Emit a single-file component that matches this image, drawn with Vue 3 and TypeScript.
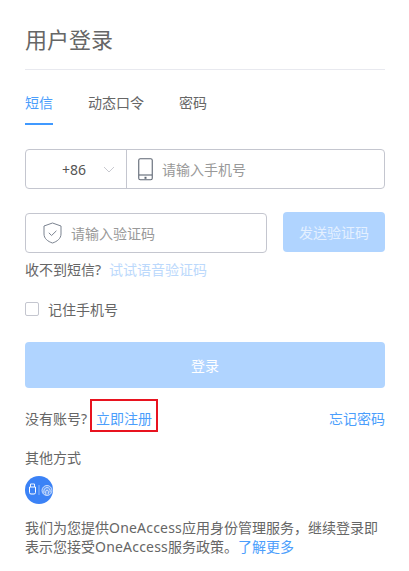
<template>
  <div class="login-page">
    <h1 class="title">用户登录</h1>

    <div class="tabs">
      <span
        v-for="tab in tabs"
        :key="tab"
        class="tab"
        :class="{ active: tab === activeTab }"
        @click="activeTab = tab"
      >{{ tab }}</span>
    </div>

    <div class="phone-box">
      <div class="country">
        <span class="code">+86</span>
        <svg class="chevron" width="12" height="7" viewBox="0 0 12 7" fill="none">
          <path d="M1 1l5 5 5-5" stroke="#c8c9d0" stroke-width="1" />
        </svg>
      </div>
      <div class="phone-input">
        <svg class="phone-icon" width="15" height="23" viewBox="0 0 15 23" fill="none">
          <rect x="0.75" y="0.75" width="13.5" height="21" rx="1.5" stroke="#5e6673" stroke-width="1.1" />
          <path d="M1 17h13" stroke="#5e6673" stroke-width="1.1" />
          <rect x="6.5" y="18.8" width="2" height="2" fill="#5e6673" />
        </svg>
        <input class="field" placeholder="请输入手机号" />
      </div>
    </div>

    <div class="code-row">
      <div class="code-box">
        <svg class="shield" width="19" height="22" viewBox="0 0 19 22" fill="none">
          <path d="M9.5 1L18 4v8c0 4.5-3.8 7.5-8.5 9C4.8 19.5 1 16.5 1 12V4z" stroke="#7b8390" stroke-width="1" />
          <path d="M5.8 10.8l2.8 2.7 4.8-4.7" stroke="#7b8390" stroke-width="1" />
        </svg>
        <input class="field" placeholder="请输入验证码" />
      </div>
      <button class="send-btn" type="button">发送验证码</button>
    </div>

    <p class="help">收不到短信?<span class="voice">试试语音验证码</span></p>

    <label class="remember">
      <span class="check"></span>
      记住手机号
    </label>

    <button class="login-btn" type="button">登录</button>

    <div class="links">
      <span>没有账号?<a class="link mark">立即注册</a></span>
      <a class="link">忘记密码</a>
    </div>

    <div class="other">其他方式</div>
    <div class="other-icon">
      <svg width="28" height="28" viewBox="0 0 28 28" fill="none">
        <circle cx="14" cy="14" r="14" fill="#3b82f6" />
        <path d="M5.5 11V8h4v3" stroke="#fff" stroke-width="0.9" />
        <path d="M4.5 11h6v5.5a1.5 1.5 0 0 1-1.5 1.5h-3a1.5 1.5 0 0 1-1.5-1.5z" stroke="#fff" stroke-width="1" />
        <path d="M14 9v10" stroke="#fff" stroke-width="0.7" opacity="0.6" />
        <g stroke="#fff" stroke-width="0.8" opacity="0.9">
          <circle cx="22" cy="14.5" r="5" fill="#fff" fill-opacity="0.2" />
          <path d="M19 17c-.8-3 1-5.5 3-5.5s3.800 2 3 5M21 19c-.6-2-.6-5 1-5s1.800 2.500 1 4.500" />
        </g>
      </svg>
    </div>

    <div class="notice">
      <div>我们为您提供<span class="brand">OneAccess</span>应用身份管理服务，继续登录即</div>
      <div>表示您接受<span class="brand">OneAccess</span>服务政策。<a class="link">了解更多</a></div>
    </div>
  </div>
</template>

<script setup lang="ts">
import { ref } from 'vue';

const tabs = ['短信', '动态口令', '密码'];
const activeTab = ref('短信');
</script>

<style>
body {
  margin: 0;
  background: #fff;
}
</style>

<style scoped>
.login-page {
  width: 360px;
  height: 571px;
  padding: 0 24px 0 25px;
  overflow: hidden;
  font-family: "Noto Sans", "Noto Sans CJK SC", sans-serif;
  font-size: 14px;
  color: #666;
}

.title {
  margin: 0;
  padding-top: 23px;
  height: 46px;
  line-height: 32px;
  font-size: 22px;
  font-weight: 400;
  color: #666;
  border-bottom: 1px solid #e8e9ef;
}

.tabs {
  display: flex;
  gap: 35px;
  margin-top: 22px;
}

.tab {
  height: 31px;
  line-height: 22px;
  border-bottom: 2px solid transparent;
  cursor: pointer;
}

.tab.active {
  color: #4b9efc;
  border-bottom-color: #4099ff;
}

.phone-box {
  display: flex;
  height: 38px;
  margin-top: 24px;
  border: 1px solid #c4c6cf;
  border-radius: 4px;
}

.country {
  display: flex;
  align-items: center;
  width: 100px;
  flex: none;
  border-right: 1px solid #c4c6cf;
}

.code {
  margin-left: 36px;
  color: #555;
}

.chevron {
  margin-left: 17px;
}

.phone-input {
  display: flex;
  align-items: center;
  flex: 1;
  padding-left: 11px;
}

.field {
  flex: 1;
  min-width: 0;
  padding: 0;
  border: none;
  outline: none;
  background: transparent;
  font: inherit;
  color: #666;
}

.field::placeholder {
  color: #999;
  opacity: 1;
}

.phone-icon {
  flex: none;
  margin-right: 9px;
}

.code-row {
  display: flex;
  justify-content: space-between;
  margin-top: 23px;
}

.code-box {
  display: flex;
  align-items: center;
  width: 223px;
  height: 38px;
  margin-top: 1px;
  padding-left: 17px;
  border: 1px solid #c4c6cf;
  border-radius: 4px;
}

.shield {
  flex: none;
  margin-right: 9px;
}

.send-btn,
.login-btn {
  border: none;
  border-radius: 4px;
  background: #b0d4ff;
  color: #fff;
  font: inherit;
  padding: 0;
}

.send-btn {
  width: 102px;
  height: 40px;
  color: #e4f0ff;
}

.help {
  margin: 7px 0 0;
  line-height: 20px;
}

.voice {
  margin-left: 8px;
  color: #bcd9fc;
}

.remember {
  display: flex;
  align-items: center;
  margin-top: 19px;
  height: 20px;
}

.check {
  width: 12px;
  height: 12px;
  margin-right: 9px;
  border: 1px solid #c4c6cf;
  border-radius: 2px;
}

.login-btn {
  display: block;
  width: 100%;
  height: 46px;
  margin-top: 23px;
}

.links {
  display: flex;
  justify-content: space-between;
  align-items: center;
  margin-top: 20px;
  height: 22px;
  line-height: 22px;
}

.link {
  color: #4b9efc;
}

.mark {
  position: relative;
  display: inline-block;
  margin-left: 9px;
}

/* red annotation box over the register link */
.mark::after {
  content: "";
  position: absolute;
  top: -9px;
  right: -6px;
  bottom: -2px;
  left: -6px;
  border: 2px solid #e8131f;
}

.other {
  margin-top: 18px;
  line-height: 20px;
}

.other-icon {
  height: 28px;
  margin-top: 8px;
}

.notice {
  margin-top: 14px;
  line-height: 19px;
}

.brand {
  letter-spacing: 0.2px;
}
</style>
